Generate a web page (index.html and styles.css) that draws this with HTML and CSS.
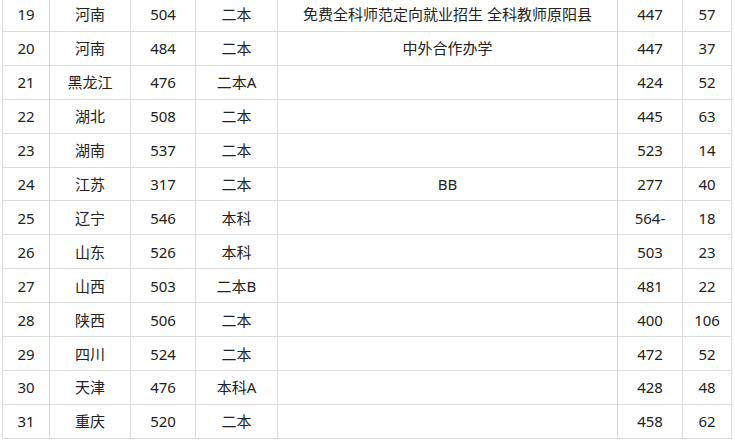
FILE: index.html
```html
<!DOCTYPE html>
<html lang="zh">
<head>
<meta charset="utf-8">
<link rel="stylesheet" href="styles.css">
</head>
<body>
<table class="score">
<colgroup>
<col class="c1"><col class="c2"><col class="c3"><col class="c4"><col class="c5"><col class="c6"><col class="c7">
</colgroup>
<tbody>
<tr><td>19</td><td>河南</td><td>504</td><td>二本</td><td>免费全科师范定向就业招生 全科教师原阳县</td><td>447</td><td>57</td></tr>
<tr><td>20</td><td>河南</td><td>484</td><td>二本</td><td>中外合作办学</td><td>447</td><td>37</td></tr>
<tr><td>21</td><td>黑龙江</td><td>476</td><td>二本A</td><td></td><td>424</td><td>52</td></tr>
<tr><td>22</td><td>湖北</td><td>508</td><td>二本</td><td></td><td>445</td><td>63</td></tr>
<tr><td>23</td><td>湖南</td><td>537</td><td>二本</td><td></td><td>523</td><td>14</td></tr>
<tr><td>24</td><td>江苏</td><td>317</td><td>二本</td><td>BB</td><td>277</td><td>40</td></tr>
<tr><td>25</td><td>辽宁</td><td>546</td><td>本科</td><td></td><td>564-</td><td>18</td></tr>
<tr><td>26</td><td>山东</td><td>526</td><td>本科</td><td></td><td>503</td><td>23</td></tr>
<tr><td>27</td><td>山西</td><td>503</td><td>二本B</td><td></td><td>481</td><td>22</td></tr>
<tr><td>28</td><td>陕西</td><td>506</td><td>二本</td><td></td><td>400</td><td>106</td></tr>
<tr><td>29</td><td>四川</td><td>524</td><td>二本</td><td></td><td>472</td><td>52</td></tr>
<tr><td>30</td><td>天津</td><td>476</td><td>本科A</td><td></td><td>428</td><td>48</td></tr>
<tr><td>31</td><td>重庆</td><td>520</td><td>二本</td><td></td><td>458</td><td>62</td></tr>
</tbody>
</table>
</body>
</html>
```
FILE: styles.css
```css
html, body {
  margin: 0;
  padding: 0;
  background: #fff;
}
body {
  padding-left: 2px;
  overflow: hidden;
}
.score {
  margin-top: -3px;
  border-collapse: collapse;
  table-layout: fixed;
  width: 730px;
  font-family: "Noto Sans", "Noto Sans CJK SC", sans-serif;
  font-size: 15px;
  color: #222;
}
.c1 { width: 47px; }
.c2 { width: 81px; }
.c3 { width: 65px; }
.c4 { width: 82px; }
.c5 { width: 340px; }
.c6 { width: 65px; }
.c7 { width: 49px; }
.score td {
  border: 1px solid #dcdcdc;
  height: 32.92px;
  padding: 0;
  text-align: center;
  vertical-align: middle;
  white-space: nowrap;
  line-height: 20px;
}
```
